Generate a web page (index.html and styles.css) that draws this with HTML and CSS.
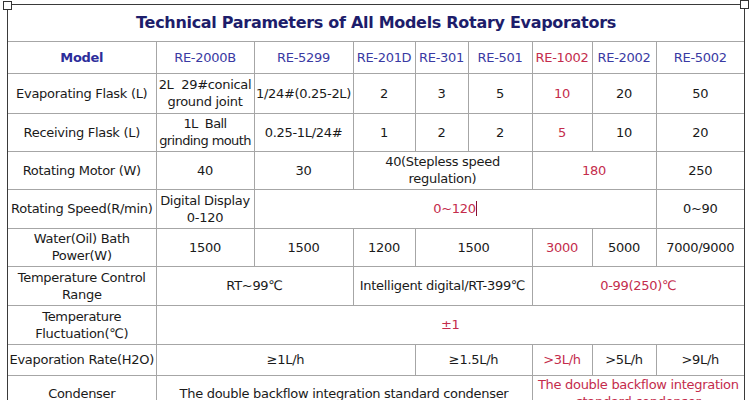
FILE: index.html
```html
<!DOCTYPE html>
<html>
<head>
<meta charset="utf-8">
<link rel="stylesheet" href="styles.css">
</head>
<body>
<div class="frame">
  <span class="handle handle-left"></span>
  <span class="handle handle-right"></span>
  <table class="spec">
    <colgroup>
      <col class="c1"><col class="c2"><col class="c3"><col class="c4"><col class="c5"><col class="c6"><col class="c7"><col class="c8"><col class="c9">
    </colgroup>
    <tr class="r-title"><td colspan="9" class="title">Technical Parameters of All Models Rotary Evaporators</td></tr>
    <tr class="r-model">
      <td class="model-head">Model</td>
      <td class="model">RE-2000B</td>
      <td class="model">RE-5299</td>
      <td class="model">RE-201D</td>
      <td class="model">RE-301</td>
      <td class="model">RE-501</td>
      <td class="red">RE-1002</td>
      <td class="model">RE-2002</td>
      <td class="model">RE-5002</td>
    </tr>
    <tr class="r-evap">
      <td>Evaporating Flask (L)</td>
      <td>2L&nbsp; 29#conical ground joint</td>
      <td>1/24#(0.25-2L)</td>
      <td>2</td><td>3</td><td>5</td>
      <td class="red">10</td><td>20</td><td>50</td>
    </tr>
    <tr class="r-recv">
      <td>Receiving Flask (L)</td>
      <td class="tight">1L&nbsp; Ball<br>grinding mouth</td>
      <td>0.25-1L/24#</td>
      <td>1</td><td>2</td><td>2</td>
      <td class="red">5</td><td>10</td><td>20</td>
    </tr>
    <tr class="r-motor">
      <td>Rotating Motor (W)</td>
      <td>40</td>
      <td>30</td>
      <td colspan="3">40(Stepless speed regulation)</td>
      <td colspan="2" class="red">180</td>
      <td>250</td>
    </tr>
    <tr class="r-speed">
      <td>Rotating Speed(R/min)</td>
      <td>Digital Display 0-120</td>
      <td colspan="6" class="red">0~120<span class="caret"></span></td>
      <td>0~90</td>
    </tr>
    <tr class="r-water">
      <td>Water(Oil) Bath Power(W)</td>
      <td>1500</td>
      <td>1500</td>
      <td>1200</td>
      <td colspan="2">1500</td>
      <td class="red">3000</td>
      <td>5000</td>
      <td>7000/9000</td>
    </tr>
    <tr class="r-temp">
      <td>Temperature Control Range</td>
      <td colspan="2">RT~99℃</td>
      <td colspan="3">Intelligent digital/RT-399℃</td>
      <td colspan="3" class="red">0-99(250)℃</td>
    </tr>
    <tr class="r-fluct">
      <td>Temperature Fluctuation(℃)</td>
      <td colspan="8" class="red">±1</td>
    </tr>
    <tr class="r-rate">
      <td>Evaporation Rate(H2O)</td>
      <td colspan="3">≥1L/h</td>
      <td colspan="2">≥1.5L/h</td>
      <td class="red">&gt;3L/h</td>
      <td>&gt;5L/h</td>
      <td>&gt;9L/h</td>
    </tr>
    <tr class="r-cond">
      <td>Condenser</td>
      <td colspan="5">The double backflow integration standard condenser</td>
      <td colspan="3" class="red">The double backflow integration standard condenser</td>
    </tr>
  </table>
</div>
</body>
</html>
```

FILE: styles.css
```css
html, body {
  margin: 0;
  padding: 0;
  background: #ffffff;
}

body {
  font-family: "DejaVu Sans", Verdana, sans-serif;
  font-size: 13px;
  color: #1a1a1a;
  overflow: hidden;
}

.frame {
  position: relative;
  margin: 4px 0 0 7px;
  width: 738px;
  box-sizing: border-box;
  border: 1px solid #3a3a3a;
  border-bottom: none;
}

.handle {
  position: absolute;
  width: 7px;
  height: 7px;
  border: 1px solid #333333;
  background: #ffffff;
  z-index: 2;
}

.handle-left {
  left: -5px;
  top: -4px;
}

.handle-right {
  right: -5px;
  top: -5px;
}

.spec {
  width: 736px;
  table-layout: fixed;
  border-collapse: collapse;
  border-style: hidden;
}

.c1 { width: 148px; }
.c2 { width: 98px; }
.c3 { width: 99px; }
.c4 { width: 62px; }
.c5 { width: 53px; }
.c6 { width: 64px; }
.c7 { width: 60px; }
.c8 { width: 64px; }
.c9 { width: 88px; }

.spec td {
  border: 1px solid #a6a6a6;
  text-align: center;
  vertical-align: middle;
  padding: 0;
  line-height: 17px;
  letter-spacing: -0.3px;
  overflow: hidden;
}

.spec td.tight {
  letter-spacing: -0.6px;
  white-space: nowrap;
}

.spec td.title {
  font-size: 16px;
  font-weight: bold;
  color: #1d1d6b;
  letter-spacing: -0.3px;
}

.spec td.model-head {
  font-weight: bold;
  color: #2d2d9b;
}

.spec td.model {
  color: #3a3aa3;
}

.spec td.red {
  color: #c42c4c;
}

.caret {
  display: inline-block;
  width: 1px;
  height: 15px;
  background: #8a1030;
  vertical-align: -3px;
}

.r-title { height: 36px; }
.r-model { height: 32px; }
.r-evap { height: 40px; }
.r-recv { height: 38px; }
.r-motor { height: 38px; }
.r-speed { height: 39px; }
.r-water { height: 38px; }
.r-temp { height: 39px; }
.r-fluct { height: 39px; }
.r-rate { height: 31px; }
.r-cond { height: 36px; }
```
